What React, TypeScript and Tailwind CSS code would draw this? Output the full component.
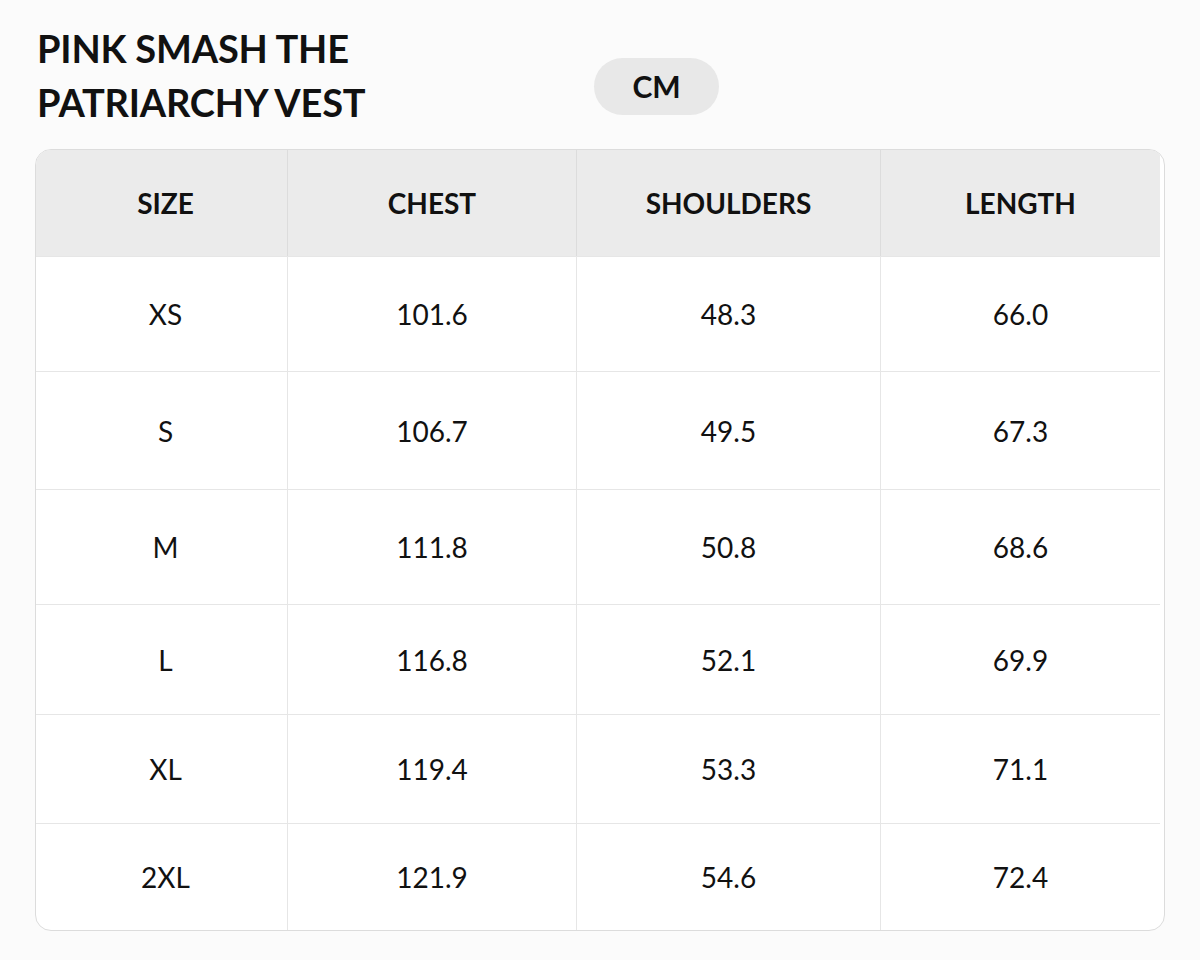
import React from "react";

const rows = [
  { s: "XS", c: "101.6", sh: "48.3", l: "66.0", h: "h-[115px]" },
  { s: "S", c: "106.7", sh: "49.5", l: "67.3", h: "h-[118px]" },
  { s: "M", c: "111.8", sh: "50.8", l: "68.6", h: "h-[115px]" },
  { s: "L", c: "116.8", sh: "52.1", l: "69.9", h: "h-[110px]" },
  { s: "XL", c: "119.4", sh: "53.3", l: "71.1", h: "h-[109px]" },
  { s: "2XL", c: "121.9", sh: "54.6", l: "72.4", h: "h-[107px]" },
];

export default function App() {
  return (
    <div
      className="w-[1200px] h-[960px] bg-[#fbfbfb] text-[#111111] px-[35px] pt-[21px]"
      style={{ fontFamily: "Lato, 'Noto Sans', sans-serif" }}
    >
      <div className="flex">
        <h1 className="w-[559px] pl-[2px] text-[38px] leading-[54px] font-bold tracking-[-0.2px]">
          PINK SMASH THE
          <br />
          PATRIARCHY VEST
        </h1>
        <div className="mt-[37px] w-[125px] h-[57px] rounded-full bg-[#e8e8e8] flex items-center justify-center text-[30px] font-bold">
          CM
        </div>
      </div>
      <div className="mt-[20px] border border-[#dcdcdc] rounded-[16px] overflow-hidden bg-white grid grid-cols-[251px_289px_304px_280px]">
        {["SIZE", "CHEST", "SHOULDERS", "LENGTH"].map((t, i) => (
          <div
            key={t}
            className={`h-[106px] bg-[#ebebeb] flex items-center justify-center text-[28px] font-bold ${
              i > 0 ? "border-l border-[#dcdcdc]" : ""
            } ${i === 0 ? "pl-[8px]" : ""}`}
          >
            {t}
          </div>
        ))}
        {rows.map((r) =>
          [r.s, r.c, r.sh, r.l].map((v, i) => (
            <div
              key={r.s + i}
              className={`${r.h} flex items-center justify-center text-[28px] border-t border-[#e6e6e6] ${
                i > 0 ? "border-l" : ""
              } ${i === 0 ? "pl-[8px]" : ""}`}
            >
              {v}
            </div>
          ))
        )}
      </div>
    </div>
  );
}
